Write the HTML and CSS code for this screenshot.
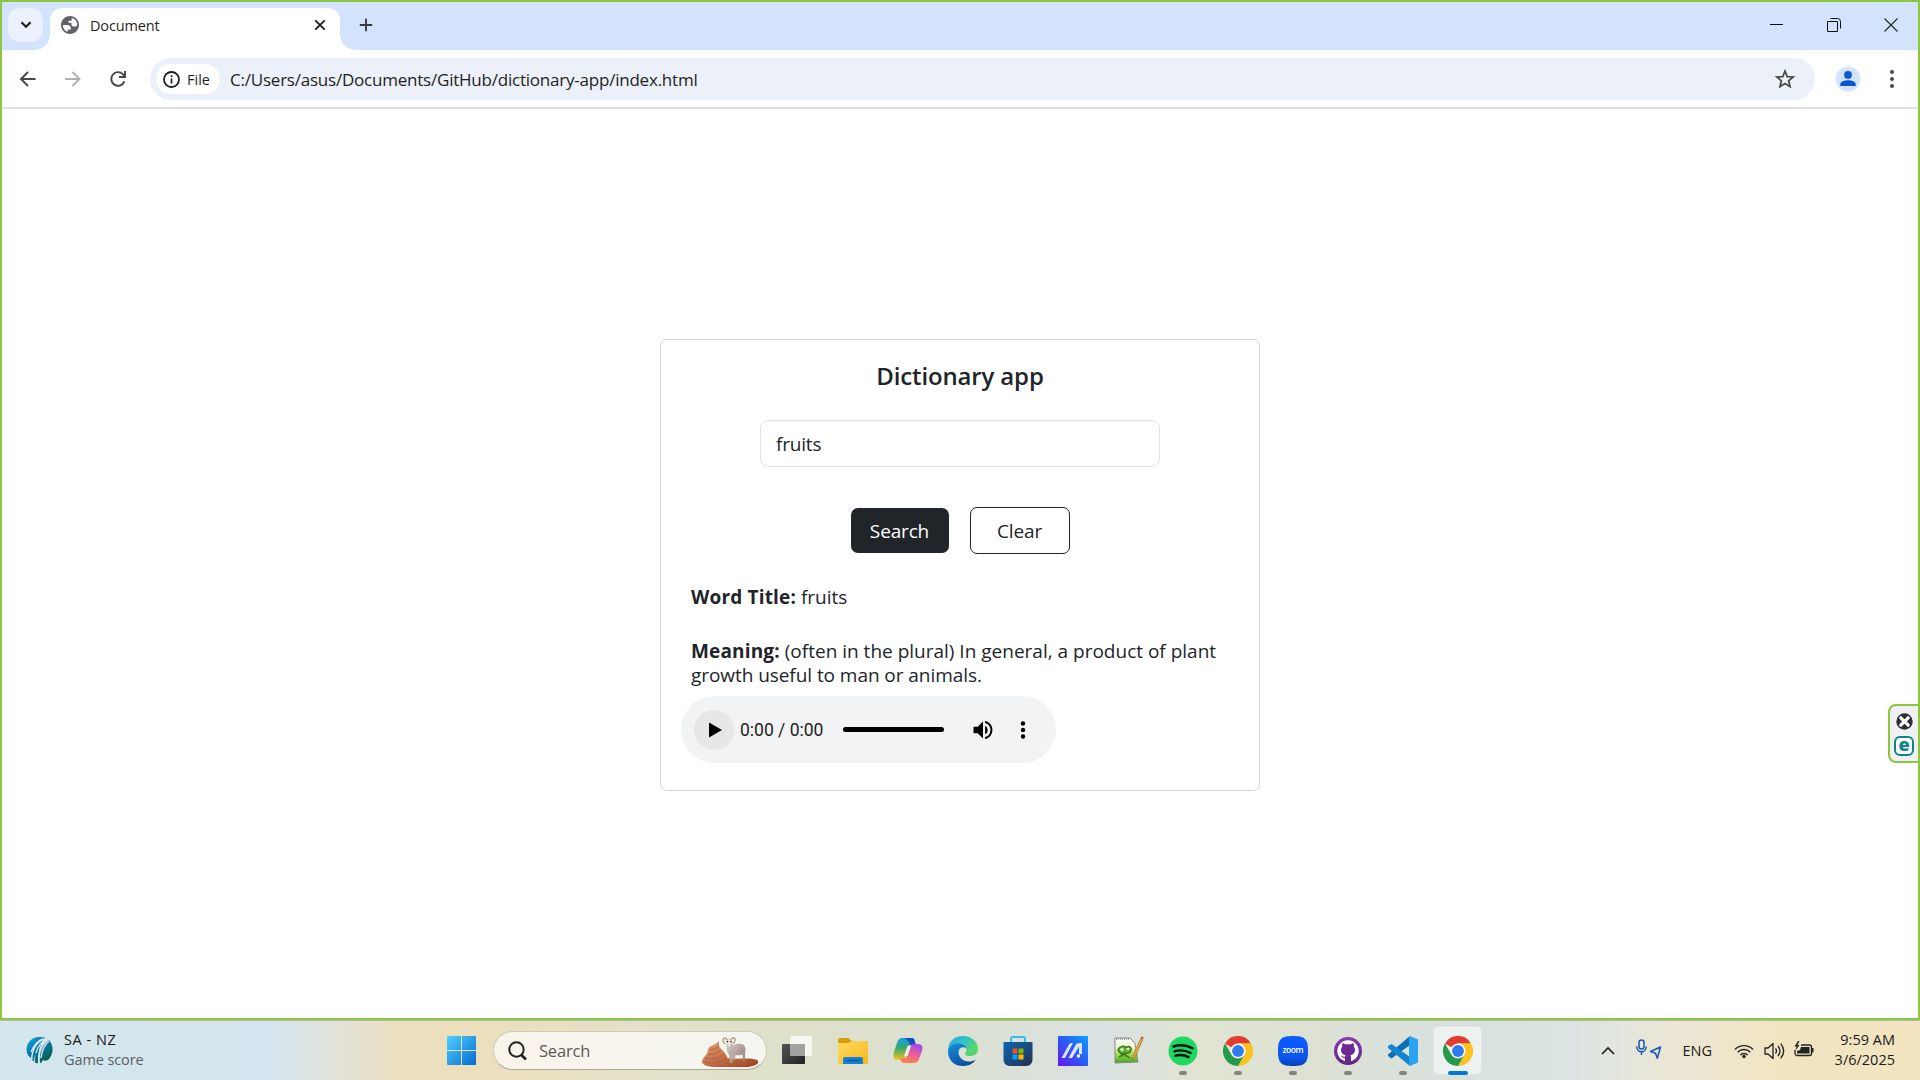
FILE: index.html
```html
<!DOCTYPE html>
<html lang="en">
<head>
<meta charset="utf-8">
<title>Document</title>
<link rel="stylesheet" href="styles.css">
</head>
<body>
<svg width="0" height="0" class="defs" aria-hidden="true">
  <defs>
    <linearGradient id="win" x1="0" y1="0" x2="1" y2="1"><stop offset="0" stop-color="#4fd2ff"/><stop offset="1" stop-color="#0669cf"/></linearGradient>
    <linearGradient id="icc" x1="0" y1="0" x2=".7" y2="1"><stop offset="0" stop-color="#12a9de"/><stop offset=".45" stop-color="#0878bb"/><stop offset="1" stop-color="#04623f"/></linearGradient>
    <linearGradient id="sand" x1="0" y1="0" x2="1" y2="1"><stop offset="0" stop-color="#e8a177"/><stop offset="1" stop-color="#9d3f1d"/></linearGradient>
    <linearGradient id="wool" x1="0" y1="0" x2="1" y2="1"><stop offset="0" stop-color="#e0d5d0"/><stop offset="1" stop-color="#8f7d78"/></linearGradient>
    <linearGradient id="dark" x1="0" y1="0" x2="1" y2="1"><stop offset="0" stop-color="#555"/><stop offset="1" stop-color="#222"/></linearGradient>
    <linearGradient id="folder" x1="0" y1="0" x2="1" y2="1"><stop offset="0" stop-color="#ffdc62"/><stop offset="1" stop-color="#f8b51c"/></linearGradient>
    <linearGradient id="copA" x1="0" y1="0" x2="0" y2="1"><stop offset="0" stop-color="#1c9ce8"/><stop offset=".45" stop-color="#34a96d"/><stop offset="1" stop-color="#f5c518"/></linearGradient>
    <linearGradient id="copB" x1=".6" y1="0" x2=".2" y2="1"><stop offset="0" stop-color="#a34be8"/><stop offset=".5" stop-color="#f0608f"/><stop offset="1" stop-color="#fb8a4a"/></linearGradient>
    <linearGradient id="edgeA" x1="0" y1="0" x2="1" y2=".6"><stop offset="0" stop-color="#2aa5dc"/><stop offset=".5" stop-color="#2fc3c8"/><stop offset="1" stop-color="#62dc5a"/></linearGradient>
    <linearGradient id="edgeB" x1="0" y1="0" x2=".6" y2="1"><stop offset="0" stop-color="#1690df"/><stop offset="1" stop-color="#0c4f9e"/></linearGradient>
    <linearGradient id="store" x1="0" y1="0" x2="1" y2="1"><stop offset="0" stop-color="#0b66b5"/><stop offset="1" stop-color="#27304f"/></linearGradient>
    <linearGradient id="asus" x1="0" y1="1" x2="1" y2="0"><stop offset="0" stop-color="#6714f5"/><stop offset=".5" stop-color="#2a5af8"/><stop offset="1" stop-color="#0aa0ff"/></linearGradient>
    <linearGradient id="npp" x1="0" y1="0" x2="0" y2="1"><stop offset="0" stop-color="#fff"/><stop offset=".35" stop-color="#eef5d6"/><stop offset=".6" stop-color="#b9de5c"/><stop offset="1" stop-color="#3fa51c"/></linearGradient>
    <linearGradient id="zoomg" x1="0" y1="0" x2="0" y2="1"><stop offset="0" stop-color="#0b5cff"/><stop offset=".7" stop-color="#0b55f0"/><stop offset="1" stop-color="#0a3fb8"/></linearGradient>
    <linearGradient id="gh" x1="0" y1="0" x2="0" y2="1"><stop offset="0" stop-color="#8c3bb0"/><stop offset="1" stop-color="#62248c"/></linearGradient>
    <symbol id="chrome" viewBox="0 0 48 48">
      <path fill="#e33b2e" d="M24 24 3.200 12A24 24 0 0 1 44.800 12L24 12Z"/>
      <path fill="#fcc31e" d="M24 12H44.800A24 24 0 0 1 24 48L34.400 30Z"/>
      <path fill="#249a4a" d="M13.600 30 3.200 12A24 24 0 0 0 24 48L34.400 30Z"/>
      <circle cx="24" cy="24" r="12" fill="#fff"/><circle cx="24" cy="24" r="9.500" fill="#2f7cf0"/>
    </symbol>
  </defs>
</svg>

<div class="screen">
  <div class="browser">
    <header class="tabstrip">
      <button class="tab-search" aria-label="Search tabs"><svg width="12" height="8" viewBox="0 0 12 8"><path d="M1.500 1.300 6 5.800l4.500-4.500" fill="none" stroke="#1f1f1f" stroke-width="2.200"/></svg></button>
      <div class="tab">
        <svg width="18" height="18" viewBox="2 2 20 20"><path fill="#5f6368" d="M12 2C6.480 2 2 6.480 2 12s4.480 10 10 10 10-4.480 10-10S17.520 2 12 2zM4 12h4.400c3.407.022 4.922 1.730 4.543 5.127H9.488v2.470A8.004 8.004 0 0 1 4 12zm16-.172c-.333 1.147-.92 1.738-1.700 1.738h-2.600c-1.500 0-2-1-2-2V9.600h-3.300V7.300h3.500V4.200c3.300.7 6.100 3.600 6.100 7.628z"/></svg>
        <span class="tab-title">Document</span>
        <svg class="tab-close" width="12" height="12" viewBox="0 0 12 12"><path d="m1.300 1.300 9.400 9.400m0-9.400-9.400 9.400" stroke="#1f1f1f" stroke-width="1.900"/></svg>
      </div>
      <svg class="new-tab" width="14" height="14" viewBox="0 0 14 14"><path d="M7 .8v12.400M.8 7h12.400" stroke="#3c3c3c" stroke-width="1.900"/></svg>
      <div class="window-controls">
        <svg width="13" height="13" viewBox="0 0 13 13"><path d="M0 5.500h13" stroke="#000"/></svg>
        <svg width="14" height="14" viewBox="0 0 14 14" fill="none" stroke="#111"><path d="M.5 3.500h10v10H.5zM3.500.5h7a3 3 0 0 1 3 3v7"/></svg>
        <svg width="14" height="14" viewBox="0 0 14 14"><path d="m.5.5 13 13m0-13-13 13" stroke="#222" stroke-width="1.100"/></svg>
      </div>
    </header>
    <div class="toolbar">
      <svg class="nav" width="20" height="20" viewBox="0 0 20 20" fill="none" stroke="#474747" stroke-width="1.900"><path d="M17.500 10H3.500M10 3 3 10l7 7"/></svg>
      <svg class="nav" width="20" height="20" viewBox="0 0 20 20" fill="none" stroke="#b0b0b0" stroke-width="1.900"><path d="M2 10h14M9.500 3l7 7-7 7"/></svg>
      <svg class="nav" width="20" height="20" viewBox="0 0 20 20" fill="none" stroke="#474747" stroke-width="1.900"><path d="M16.400 12.300A6.800 6.800 0 1 1 15 5.300l1.500 2M17 2v6h-6"/></svg>
      <div class="omnibox">
        <div class="chip">
          <svg width="17" height="17" viewBox="0 0 17 17"><circle cx="8.500" cy="8.500" r="7.500" fill="none" stroke="#1f1f1f" stroke-width="1.800"/><path d="M8.500 7.500v5M8.500 4.300v1.800" stroke="#1f1f1f" stroke-width="1.700"/></svg>
          <span class="chip-label">File</span>
        </div>
        <span class="url">C:/Users/asus/Documents/GitHub/dictionary-app/index.html</span>
        <svg class="star" width="20" height="20" viewBox="0 0 20 20"><path d="m10 2 2.200 5.600 6 .4-4.600 3.800 1.500 5.900L10 14.500l-5.100 3.200 1.500-5.900L1.800 8l6-.4z" fill="none" stroke="#474747" stroke-width="1.700"/></svg>
      </div>
      <svg class="avatar" width="26" height="26" viewBox="0 0 26 26"><circle cx="13" cy="13" r="12.500" fill="#d3e3fd"/><circle cx="13" cy="8.900" r="3.900" fill="#0b57d0"/><path d="M5.300 20v-1.800c0-2.700 4.300-4 7.700-4s7.700 1.300 7.700 4V20z" fill="#0b57d0"/></svg>
      <svg class="kebab" width="6" height="20" viewBox="0 0 6 20" fill="#474747"><circle cx="3" cy="3" r="2"/><circle cx="3" cy="10" r="2"/><circle cx="3" cy="17" r="2"/></svg>
    </div>

    <main class="page">
      <section class="card">
        <h5 class="card-title">Dictionary app</h5>
        <div class="field">fruits</div>
        <div class="actions">
          <button class="btn btn-dark">Search</button>
          <button class="btn btn-outline">Clear</button>
        </div>
        <p class="entry word"><b>Word Title:</b> fruits</p>
        <p class="entry meaning"><b>Meaning:</b> (often in the plural) In general, a product of plant<br><span class="line-two">growth useful to man or animals.</span></p>
        <div class="audio">
          <span class="play"><svg width="13" height="16" viewBox="0 0 13 16"><path d="M0 .5v15L13 8z"/></svg></span>
          <span class="time">0:00 / 0:00</span>
          <span class="track"></span>
          <svg class="volume" width="20" height="20" viewBox="2.500 2.500 19 19"><path d="M3 9v6h4l5 5V4L7 9zm13.500 3A4.500 4.500 0 0 0 14 7.970v8.050A4.470 4.470 0 0 0 16.500 12zM14 3.230v2.060a7 7 0 0 1 0 13.420v2.060a9 9 0 0 0 0-17.540z"/></svg>
          <svg class="dots" width="6" height="18" viewBox="0 0 6 18"><circle cx="3" cy="2.500" r="2.200"/><circle cx="3" cy="9" r="2.200"/><circle cx="3" cy="15.500" r="2.200"/></svg>
        </div>
      </section>
    </main>
    <aside class="widget">
      <svg width="17" height="17" viewBox="0 0 17 17"><circle cx="8.500" cy="8.500" r="8.200" fill="#2b2f38"/><path d="m4.800 4.800 7.400 7.400m0-7.400-7.400 7.400" stroke="#fff" stroke-width="3.200" stroke-linecap="round"/></svg>
      <span class="e-badge">e</span>
    </aside>
  </div>

  <footer class="taskbar">
    <div class="news">
      <svg width="27" height="29" viewBox="0 0 27 29"><path fill="url(#icc)" d="M1 17C-1 8 5 1 13 1c3 0 6 .5 7 1-7 1-12 7-14 14-.3 2-1 4-1 6-2-1-3-3-4-5zM6.500 24c0-9 4-17 11-20-4 6-6 13-5.500 23-2 .5-3 0-3-1 0-4 0-7 1-10-1 3-2 6-1.800 9-.7.500-1.700 0-1.700-1zM14 27c-1-10 2-18 9-23 5 6 5 14-1 20-2 1-4 1-5 0-1 1-1 3-3 3z"/><path d="M5 16C8 9 11 5 17 3M10 17c2-7 5-11 10-14M15 22c1-8 3-13 8-17" fill="none" stroke="#dceaf0" stroke-width="1.400"/></svg>
      <div class="news-text"><span class="n1">SA - NZ</span><span class="n2">Game score</span></div>
    </div>
    <div class="dock">
      <svg class="start" width="29" height="29" viewBox="0 0 29 29" fill="url(#win)"><path d="M1 0h13v14H0V1a1 1 0 0 1 1-1zM15 0h13a1 1 0 0 1 1 1v13H15zM0 15h14v14H1a1 1 0 0 1-1-1zM15 15h14v13a1 1 0 0 1-1 1H15z"/></svg>
      <div class="search">
        <svg width="19" height="20" viewBox="0 0 19 20" fill="none" stroke="#222"><circle cx="8.500" cy="8.500" r="7.200" stroke-width="2"/><path d="m13 13.500 5 5" stroke-width="2.600"/></svg>
        <span class="search-label">Search</span>
        <svg class="ram" width="56" height="32" viewBox="0 0 56 32"><path fill="url(#sand)" d="M0 26C1 20 6 19 6 14s8-4 10.500-9c1 2 0 4 1 6 2 3 6 5 8 11 9 2 20-1 30 2 2 4-1 5-9 7H14C7 31 0 29 0 26z"/><path d="M8 14c4 0 7-2 9-4M6 18c5 1 10-1 13-4M3 22c7 2 14 0 19-4M3 26c7 2 14 1 21-3" fill="none" stroke="#b5603c" stroke-width="1"/><path fill="url(#wool)" d="M23.500 4c2-2 5-2 6.500 0l1 5c3-1 7-2 10-.5 3 2 3 6 2 9v8h-1.800l-.7-7c-3 1-5 1-7 .5l-.8 5.500h-1.500l-.5-5-.4 7.500h-1.800L27 19c-2-3-3-6-2.300-8.500z"/><path d="M25 4c-1-3-4.500-2-4 1 .2 1.500 1 2.200 2 2.500M29 4c1-3 4.500-3 4 .5-.2 1.600-1 2.300-2 2.500" fill="none" stroke="#b9a590" stroke-width="1.600"/><path fill="#efe6e1" d="M25 4.500c1-1.500 3.500-1.500 4.500 0l-1.200 6h-2z"/><circle cx="25.500" cy="5.500" r=".8" fill="#222"/><circle cx="28.800" cy="5.500" r=".8" fill="#222"/></svg>
      </div>
      <div class="apps">
        <div class="app"><svg width="31" height="29" viewBox="0 0 31 29"><rect y="8" width="23" height="20" rx="1" fill="url(#dark)"/><rect x="8" y="0" width="22" height="20" rx="1" fill="#fff" opacity=".72"/><path d="M8 8h15v12H8z" fill="#888" opacity=".6"/></svg></div>
        <div class="app"><svg width="30" height="28" viewBox="0 0 30 28"><path d="M0 3a2 2 0 0 1 2-2h8l4 3h14a2 2 0 0 1 2 2v4H0z" fill="#dc9d0b"/><path d="M0 6h10l4-2h14a2 2 0 0 1 2 2v19a2 2 0 0 1-2 2H2a2 2 0 0 1-2-2z" fill="url(#folder)"/><path d="M5 27v-5a2 2 0 0 1 2-2h16a2 2 0 0 1 2 2v5z" fill="#1681d2"/><path d="M9 23.500h12" stroke="#0a57a2" stroke-width="1.500" stroke-linecap="round"/></svg></div>
        <div class="app"><svg width="30" height="28" viewBox="0 0 30 28"><path d="M10 1h9c2 0 2.500 2 3 4l1 3h-5c-3 0-3 2-4 5l-2 7c-1 2-2 3-4 3H5c-5 0-5-5-4-8l3-9c1-3 2-5 6-5z" fill="url(#copA)"/><path d="M14 1h5c2 0 2.500 2 3 4l1 3h-6c-1-3-2-5-6-7z" fill="#164ec3"/><path d="M20 26H11c-2 0-3-1-3.500-3l-.5-2h4c3 0 3-2 4-5l2-6c1-2 2-3 4-3h4c5 0 5 4 4 7l-3 8c-1 3-3 4-6 4z" fill="url(#copB)"/><path d="M14.500 9h3.500l-3.500 10H11z" fill="#f1efe6"/></svg></div>
        <div class="app"><svg width="30" height="30" viewBox="0 0 30 30"><path d="M0 15C0 6 6 0 15 0s15 6 15 13c0 5-4 7-8 7-3 0-5-1-5-2s1.500-2 1.500-4c0-3-3-5-6.500-5C6 9 2 12 0 15z" fill="url(#edgeA)"/><path d="M0 15C1 10 5 7.500 10 7.500c6 0 9 3 8.500 7-.5-2-2-3-4-3-2.500 0-4 2-4 5 0 5 5 9 10 9 3 0 5-.6 7.500-2C25 28 20 30 15 30 6 30 0 24 0 15z" fill="url(#edgeB)"/><path d="M18.700 13.500c-.8-2.200-3-2.800-4.600-1.800-1.400 1-1.900 3-1.200 5 1.500 3.800 6 6 10.500 5.600 2-.1 3.500-.6 4.600-1.100l.7 1c-2.700 2-6.700 2.700-10.500 1.300" fill="#dde1d0"/><path d="M17 18c0 1 2 2.400 5.500 2.300 3 0 5-1 6.500-2.800l-1 4.500c-3 .8-7 .9-9.500-.9z" fill="#dde1d0"/><path d="M17 18c0-1 1.500-2 1.500-4l3-1 8 1c-.5 4.500-4.500 6-7.500 6s-5-1-5-2z" fill="#52d477"/></svg></div>
        <div class="app"><svg width="30" height="30" viewBox="0 0 30 30"><path d="M8 6V3a2 2 0 0 1 2-2h10a2 2 0 0 1 2 2v3" fill="none" stroke="#35bdf0" stroke-width="2"/><path d="M.5 6h29v18a6 6 0 0 1-6 6h-17a6 6 0 0 1-6-6z" fill="url(#store)"/><path fill="#f25022" d="M9.500 12.500h5v5h-5z"/><path fill="#7fba00" d="M15.500 12.500h5v5h-5z"/><path fill="#00a4ef" d="M9.500 18.500h5v5h-5z"/><path fill="#ffb900" d="M15.500 18.500h5v5h-5z"/></svg></div>
        <div class="app"><svg width="30" height="30" viewBox="0 0 30 30"><path d="M0 0h30v30H0z" fill="url(#asus)"/><path d="M3.500 22 11 8.500c.8-1.200 2-1.500 4-1.500L7 22zM10.500 22 18 8.500c.8-1.200 2-1.500 6-1.500v11h-3v-7.500L14 22z" fill="#dfe5ff"/><circle cx="20.500" cy="20" r="1.800" fill="#fff"/></svg></div>
        <div class="app"><svg width="30" height="28" viewBox="0 0 30 28"><path d="m2 1 15 0 5 5 3 19-23 1z" fill="url(#npp)" stroke="#8a8a8a" stroke-width="1"/><path d="M3 2h14" stroke="#555" stroke-dasharray="1 1"/><path d="M5 12.500c2-4 6-4 8.500-2 2.500-2.500 5.500 0 4.500 3-1 3-4 3.500-6 2.500-3 2.500-6 0-7-3.500zM6 20l5-3 6 4" fill="#62b52d" stroke="#2c6a1c" stroke-width="1.200"/><circle cx="9" cy="12.500" r="1.500" fill="#fff"/><circle cx="15" cy="12" r="1.300" fill="#fff"/><path d="m28 1-8 18-1 4 3-3L30 2z" fill="#eeb13b" stroke="#875b21" stroke-width=".6"/><path d="m27.500 1 2.500 1 .500-2-1.500-.6z" fill="#d24b42"/></svg></div>
        <div class="app open"><svg width="30" height="30" viewBox="0 0 30 30"><circle cx="15" cy="15" r="14.500" fill="#1ed760"/><path d="M5.500 10.500c6-2 13-1.500 19 1.700M6.500 15.300c5.500-1.600 11-1 16 1.600M7.500 19.700c4.500-1.300 9-.8 13 1.400" fill="none" stroke="#111" stroke-width="2.400" stroke-linecap="round"/></svg></div>
        <div class="app open"><svg width="30" height="30"><use href="#chrome"/></svg></div>
        <div class="app open"><svg width="30" height="30" viewBox="0 0 30 30"><path d="M15 0c12 0 15 3 15 15s-3 15-15 15S0 27 0 15 3 0 15 0z" fill="url(#zoomg)"/><text x="15" y="17.200" text-anchor="middle" textLength="21" class="zoom-word">zoom</text></svg></div>
        <div class="app open"><svg width="28" height="28" viewBox="0 0 28 28"><circle cx="14" cy="14" r="14" fill="url(#gh)"/><circle cx="14" cy="14" r="10.700" fill="#fff"/><path d="M11 25v-4c-2.500.4-3-1-4-2.200 1.700-.4 2 1.500 4 .9l.6-1.500C8.600 17.700 7 16 7 13c0-1.500.4-2.400 1.200-3.300C8 8.500 8 7.400 8.500 6.300c1.300 0 2.300.7 3.200 1.300 1.500-.4 3.100-.4 4.600 0 .9-.6 1.900-1.300 3.200-1.300.5 1.100.5 2.200.3 3.400.8.900 1.200 1.800 1.200 3.300 0 3-1.600 4.700-4.600 5.200.4.500.6 1 .6 1.800v5z" fill="#6b2a94"/></svg></div>
        <div class="app open"><svg width="30" height="30" viewBox="0 0 30 30"><path d="M22 0v9L3.500 22.500 0 20v-1.500z" fill="#0c6fb5"/><path d="M22 30v-9L3.500 8 0 10v2z" fill="#1585ce"/><path d="M22 0l8 3.500v23L22 30c-.7-.3-1-1-1-2V2c0-1 .3-1.700 1-2z" fill="#2aa4f1"/></svg></div>
        <div class="app open active"><svg width="30" height="30"><use href="#chrome"/></svg></div>
      </div>
    </div>
    <div class="tray">
      <svg class="chev" width="14" height="9" viewBox="0 0 14 9"><path d="m1 8 6-6 6 6" fill="none" stroke="#222" stroke-width="1.700"/></svg>
      <svg class="mic" width="26" height="21" viewBox="0 0 26 21" fill="none" stroke="#1b57ad" stroke-width="1.500"><rect x="3" y="1" width="5" height="9" rx="2.500"/><path d="M.8 7.500c0 7 9.400 7 9.400 0M5.500 12.500V16"/><path d="m24.500 8-10 4.500 5 1.800 1.800 5z" stroke-linejoin="round"/></svg>
      <span class="lang">ENG</span>
      <svg class="wifi" width="20" height="16" viewBox="0 0 20 16" fill="none" stroke="#222" stroke-width="1.400"><path d="M1 6.500a12.500 12.500 0 0 1 18 0M3.700 9.200a8.800 8.800 0 0 1 12.600 0M6.400 12a5 5 0 0 1 7.200 0"/><circle cx="10" cy="13.500" r="1.700" fill="#222" stroke="none"/></svg>
      <svg class="vol" width="21" height="18" viewBox="0 0 21 18" fill="none" stroke="#222" stroke-width="1.300"><path d="M1 6h3l5-4.500v15L4 12H1zM11.500 6.500q2 2.500 0 5M14 4q4 5 0 10M16.700 1.700q6 7.300 0 14.600" stroke-linejoin="round"/></svg>
      <svg class="bat" width="20" height="16" viewBox="0 0 20 16"><path d="M7 4h8.500a2 2 0 0 1 2 2v6.500a2 2 0 0 1-2 2H3a2 2 0 0 1-2-2V9" fill="none" stroke="#222" stroke-width="1.300"/><path d="M7 6h8.500v6.500H3V10l3-1zM18 7h1.500v4.500H18zM4 0 .5 5.500h2L1.500 9.500l4-5.500H3.500L5.500 0z" fill="#222"/></svg>
      <div class="clock"><span>9:59 AM</span><span>3/6/2025</span></div>
    </div>
  </footer>
</div>
</body>
</html>
```
FILE: styles.css
```css
* { box-sizing: border-box; }
body { margin: 0; font-family: "Open Sans", "Noto Sans", sans-serif; color: #212529; }
svg { display: block; flex: none; overflow: visible; }
button { font: inherit; padding: 0; border: 0; }
.defs { position: absolute; }
.screen { width: 1920px; height: 1080px; display: flex; flex-direction: column; overflow: hidden; }
.browser { position: relative; height: 1020px; border: 2px solid #8dc63f; background: #fff; display: flex; flex-direction: column; }

.tabstrip { height: 48px; background: #d3e3fd; display: flex; align-items: center; padding-left: 6px; position: relative; flex: none; }
.tab-search { width: 35px; height: 34px; margin-bottom: 2px; border-radius: 12px; background: #ebf1fe; display: flex; align-items: center; justify-content: center; }
.tab { position: relative; width: 290px; height: 42px; margin: 6px 0 0 7px; padding: 0 14px 8px 11px; background: #fff; border-radius: 12px 12px 0 0; display: flex; align-items: center; }
.tab::before, .tab::after { content: ""; position: absolute; bottom: 0; width: 15px; height: 15px; }
.tab::before { left: -15px; background: radial-gradient(circle at 0 0, transparent 14.500px, #fff 15px); }
.tab::after { right: -15px; background: radial-gradient(circle at 100% 0, transparent 14.500px, #fff 15px); }
.tab-title { margin-left: 11px; font-size: 14.500px; letter-spacing: -.15px; color: #1f1f1f; }
.tab-close { margin-left: auto; }
.new-tab { margin: 0 0 2px 19px; }
.window-controls { margin: 0 20px 2px auto; display: flex; align-items: center; gap: 43.500px; }

.toolbar { height: 59px; border-bottom: 2px solid #dfe0e2; background: #fff; box-shadow: 0 -10px 0 -2px transparent; display: flex; align-items: center; flex: none; padding: 1px 23px 0 16px; }
.nav { margin-right: 25px; }
.omnibox { height: 42px; width: 1665px; border-radius: 21px; background: #ecf0f9; display: flex; align-items: center; padding: 0 20px 0 6px; margin-left: -3px; }
.chip { width: 64px; height: 30px; border-radius: 15px; background: #fff; display: flex; align-items: center; padding-left: 7px; }
.chip-label { margin-left: 7px; font-size: 14.500px; font-weight: 500; color: #1f1f1f; }
.url { margin-left: 10px; padding-top: 1px; font-size: 17px; letter-spacing: -.22px; color: #1f1f1f; }
.star { margin-left: auto; }
.avatar { margin-left: 20px; }
.kebab { margin-left: auto; }

.page { flex: 1; display: flex; align-items: flex-start; justify-content: center; padding-top: 230px; }
.card { width: 600px; height: 452px; border: 1px solid #d2d3d4; border-radius: 7px; padding: 21px 20px; display: flex; flex-direction: column; align-items: center; }
.card-title { margin: 0; font-size: 24px; line-height: 30px; font-weight: 600; letter-spacing: -.15px; }
.field { width: 400px; height: 47px; margin-top: 29px; border: 1px solid #dee2e6; border-radius: 8px; padding: 0 15px; font-size: 19px; letter-spacing: -.2px; display: flex; align-items: center; }
.actions { display: flex; align-items: center; gap: 21px; margin-top: 40px; height: 47px; }
.btn { border-radius: 7px; font-size: 19px; letter-spacing: -.15px; display: flex; align-items: center; justify-content: center; }
.btn-dark { width: 98px; height: 45px; background: #212529; color: #fff; }
.btn-outline { width: 100px; height: 47px; background: #fff; border: 1px solid #212529; color: #212529; }
.entry { align-self: stretch; margin: 0 10px; font-size: 19px; line-height: 24px; white-space: nowrap; }
.entry b { letter-spacing: .16px; }
.word { margin-top: 31px; }
.meaning { margin-top: 30px; }
.line-two { letter-spacing: -.06px; }
.audio { align-self: flex-start; width: 375px; height: 67px; margin-top: 9px; border-radius: 34px; background: #f1f3f4; display: flex; align-items: center; padding-left: 13px; }
.play { width: 40px; height: 40px; border-radius: 50%; background: #e5e7e8; display: flex; align-items: center; justify-content: center; padding-left: 2px; }
.time { margin-left: 6px; width: 83px; font: 17.500px Roboto, sans-serif; color: #222; white-space: nowrap; }
.track { width: 101px; height: 5px; border-radius: 3px; background: #000; margin-left: 20px; }
.volume { margin-left: 29px; }
.dots { margin-left: 27px; }

.widget { position: absolute; right: -2px; top: 702px; width: 32px; height: 59px; border: 2px solid #8dc63f; border-radius: 8px 0 0 8px; background: #f0f0f0; display: flex; flex-direction: column; align-items: center; padding-top: 7px; gap: 6px; }
.e-badge { width: 20px; height: 20px; border: 2px solid #0f8290; border-radius: 6px; background: #fff; color: #0f8290; font-weight: 800; font-size: 18px; line-height: 13px; text-align: center; }

.taskbar { height: 60px; border-top: 1px solid #b5b8ac; background: linear-gradient(90deg, #d3e7ed 0, #d5e4ee 270px, #e0e2da 330px, #ecdfbf 400px, #ebdfbd 490px, #e3e1c8 640px, #dde0cc 860px, #dbe1d8 1030px, #d9e2e3 1100px, #e1e4d2 1200px, #dce1d4 1320px, #d7e1e0 1480px, #dbe4e3 1570px, #ebe6d6 1670px, #f1e4c1 1780px, #f1e4bf 1920px); display: flex; align-items: center; }
.news { width: 447px; display: flex; align-items: center; padding-left: 26px; }
.news-text { display: flex; flex-direction: column; margin: 0 0 2px 11px; font-size: 14.500px; line-height: 20px; align-items: flex-start; }
.n1 { color: #1b1b1b; letter-spacing: .55px; }
.n2 { color: #5a6063; letter-spacing: -.1px; }
.dock { display: flex; align-items: center; }
.search { width: 274px; height: 39px; margin-left: 17px; border-radius: 20px; border: 1px solid #cfcbbd; border-bottom-color: #aba99f; background: linear-gradient(90deg, #f9f4ea, #f5f6f0); display: flex; align-items: center; padding: 0 9px 0 14px; }
.search-label { margin-left: 12px; font-size: 16.500px; letter-spacing: -.2px; color: #5c5b57; }
.ram { margin: 2px -1px 0 auto; }
.apps { display: flex; align-items: center; margin-left: 3px; }
.app { position: relative; width: 55px; height: 49px; display: flex; align-items: center; justify-content: center; }
.app.open::after { content: ""; position: absolute; bottom: 0; width: 8px; height: 4px; border-radius: 2px; background: #83867e; }
.app.active::before { content: ""; position: absolute; inset: 0 3px; border-radius: 5px; background: #edf1f0; border: 1px solid #e1e4e2; }
.app.active svg { position: relative; }
.app.open.active::after { width: 20px; background: #0078d4; }
.zoom-word { font: 600 8.500px "Open Sans", sans-serif; fill: #fff; }
.tray { margin-left: auto; display: flex; align-items: center; padding-right: 25px; color: #1b1b1b; }
.mic { margin: 0 0 3px 21px; }
.lang { margin-left: 20px; font-size: 14.500px; }
.wifi { margin-left: 22px; }
.vol { margin-left: 10px; }
.bat { margin: 0 0 3px 9px; }
.clock { width: 81px; margin-bottom: 2px; display: flex; flex-direction: column; align-items: flex-end; font-size: 14.500px; line-height: 20px; }
```
